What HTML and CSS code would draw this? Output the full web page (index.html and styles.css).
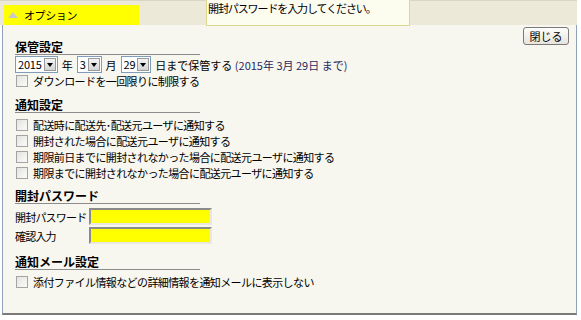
FILE: index.html
```html
<!DOCTYPE html>
<html lang="ja">
<head>
  <meta charset="UTF-8" />
  <title>オプション</title>
  <link rel="stylesheet" href="styles.css">
</head>
<body>
  <div class="frame">
    <div class="topbar">
      <div class="tab"><span class="tab-arrow"></span>オプション</div>
      <div class="tooltip">開封パスワードを入力してください。</div>
    </div>

    <div class="panel">
      <button class="close-btn">閉じる</button>

      <div class="section first">
        <h2>保管設定</h2>
        <div class="date-row">
          <span class="select"><span class="select-val">2015</span><span class="select-btn"></span></span>
          <span class="unit">年</span>
          <span class="select"><span class="select-val">3</span><span class="select-btn"></span></span>
          <span class="unit">月</span>
          <span class="select"><span class="select-val">29</span><span class="select-btn"></span></span>
          <span class="unit">日まで保管する <span class="until">(2015年 3月 29日 まで)</span></span>
        </div>
        <label class="check-row"><span class="check"></span>ダウンロードを一回限りに制限する</label>
      </div>

      <div class="section notify">
        <h2>通知設定</h2>
        <div class="check-list">
          <label class="check-row"><span class="check"></span>配送時に配送先･配送元ユーザに通知する</label>
          <label class="check-row"><span class="check"></span>開封された場合に配送元ユーザに通知する</label>
          <label class="check-row"><span class="check"></span>期限前日までに開封されなかった場合に配送元ユーザに通知する</label>
          <label class="check-row"><span class="check"></span>期限までに開封されなかった場合に配送元ユーザに通知する</label>
        </div>
      </div>

      <div class="section password">
        <h2>開封パスワード</h2>
        <div class="pw-rows">
          <div class="pw-row"><span class="pw-label">開封パスワード</span><span class="pw-input"></span></div>
          <div class="pw-row"><span class="pw-label">確認入力</span><span class="pw-input"></span></div>
        </div>
      </div>

      <div class="section mail">
        <h2>通知メール設定</h2>
        <div class="check-list">
          <label class="check-row"><span class="check"></span>添付ファイル情報などの詳細情報を通知メールに表示しない</label>
        </div>
      </div>
    </div>
  </div>
</body>
</html>
```

FILE: styles.css
```css
:root {
  --bar-bg: #ece9d8;
  --panel-bg: #f7f6ef;
  --frame-border: #8fa2bb;
  --rule: #8c8c8c;
  --field-border: #7f9db9;
  --yellow: #ffff00;
  --navy: #1f2a62;
}

* {
  box-sizing: border-box;
  margin: 0;
  padding: 0;
}

body {
  font-family: "Noto Sans CJK JP", "Liberation Sans", sans-serif;
  font-size: 11px;
  color: #000;
  background: #fff;
  width: 581px;
  height: 320px;
  overflow: hidden;
}

.frame {
  width: 577px;
}

/* top strip */
.topbar {
  position: relative;
  height: 25px;
  background: var(--bar-bg);
  border-top: 1px solid #d9d6c6;
  padding: 4px 0 0 4px;
}

.tab {
  display: flex;
  align-items: center;
  width: 135px;
  height: 20px;
  background: var(--yellow);
  padding-left: 4px;
  letter-spacing: -0.4px;
}

.tab-arrow {
  width: 0;
  height: 0;
  border-left: 5px solid transparent;
  border-right: 5px solid transparent;
  border-bottom: 6px solid #c8c8c8;
  margin-right: 6px;
}

.tooltip {
  position: absolute;
  left: 206px;
  top: -1px;
  width: 204px;
  height: 26px;
  background: #fcfcef;
  border: 1px solid #dcd690;
  border-top: none;
  padding: 1px 0 0 1px;
  line-height: 14px;
  letter-spacing: -1.1px;
  z-index: 2;
}

/* main panel */
.panel {
  margin-left: 2px;
  height: 290px;
  background: var(--panel-bg);
  border-left: 1px solid var(--frame-border);
  border-right: 1px solid var(--frame-border);
  border-bottom: 2px solid #7a7a7a;
  padding: 3px 7px 0 12px;
}

.close-btn {
  float: right;
  width: 46px;
  height: 18px;
  margin-top: -1px;
  font-family: inherit;
  font-size: 11px;
  line-height: 14px;
  color: #000;
  background: linear-gradient(#fdfdfb, #e6e4dc);
  border: 1px solid #7a7a7a;
  border-radius: 3px;
  cursor: pointer;
}

.section h2 {
  width: 185px;
  font-size: 12px;
  font-weight: bold;
  line-height: 14px;
  border-bottom: 1px solid var(--rule);
}

.section.first { padding-top: 12px; }
.section.notify { margin-top: 9px; }
.section.password { margin-top: 8px; }
.section.mail { margin-top: 10px; }

.date-row {
  display: flex;
  align-items: center;
  height: 17px;
  margin-top: 1px;
}

.select {
  display: flex;
  align-items: center;
  height: 17px;
  background: #fff;
  border: 1px solid var(--field-border);
  padding: 1px;
}

.select-val {
  padding: 0 2px 0 1px;
  line-height: 13px;
  letter-spacing: -0.2px;
}

.select-btn {
  position: relative;
  width: 12px;
  height: 13px;
  background: linear-gradient(#f4f4f4, #d4d4d4);
  border: 1px solid #9a9a9a;
}

.select-btn::after {
  content: "";
  position: absolute;
  left: 2px;
  top: 4px;
  border-left: 3px solid transparent;
  border-right: 3px solid transparent;
  border-top: 4px solid #000;
}

.unit {
  margin: 0 4px;
}

.until {
  color: var(--navy);
}

.check-row {
  display: flex;
  align-items: center;
  height: 16px;
  letter-spacing: -0.6px;
}

.check {
  flex: none;
  width: 12px;
  height: 12px;
  margin: 0 5px 0 1px;
  background: linear-gradient(135deg, #e4e4e0, #fafaf8);
  border: 1px solid #a4a4a4;
}

.check-list {
  margin-top: 4px;
}

.pw-rows {
  margin-top: 3px;
}

.pw-row {
  display: flex;
  align-items: center;
  height: 19px;
}

.pw-label {
  width: 74px;
  letter-spacing: -0.8px;
}

.pw-input {
  width: 123px;
  height: 17px;
  background: var(--yellow);
  border: 2px solid #8a8a8a;
  border-right-color: #e8e8e0;
  border-bottom-color: #e8e8e0;
}
```
